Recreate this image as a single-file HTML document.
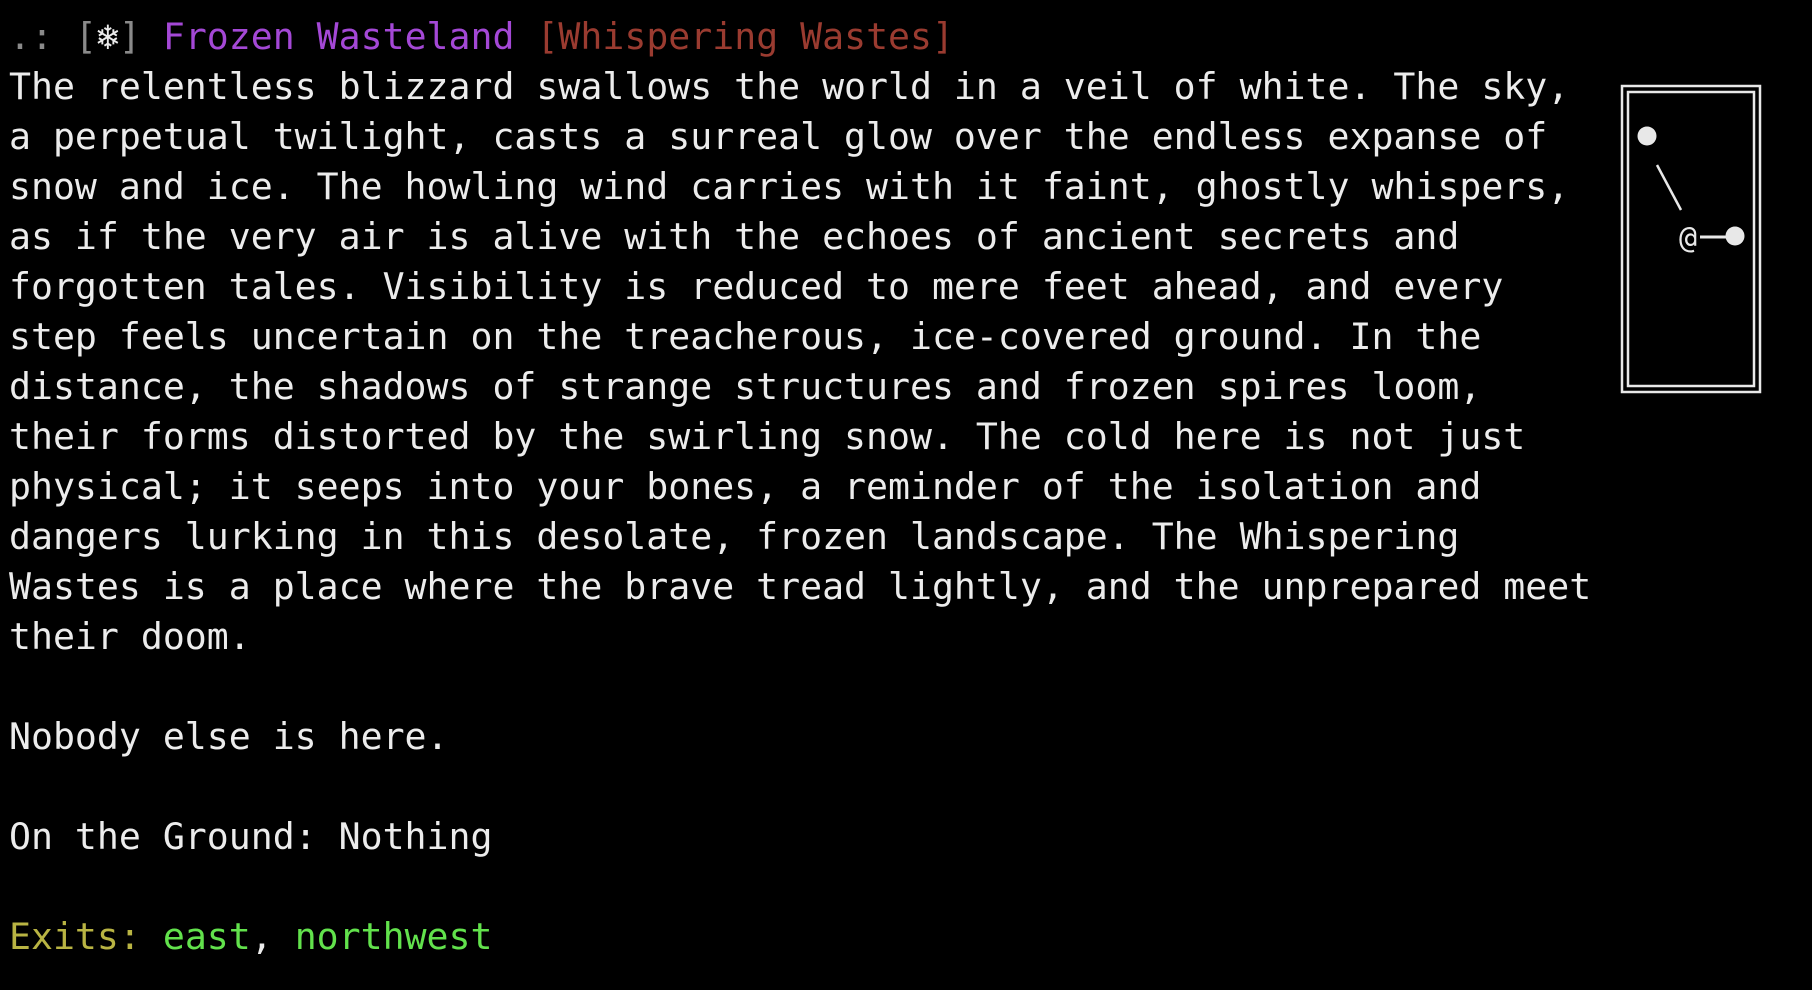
<!DOCTYPE html>
<html><head><meta charset="utf-8"><style>
html,body{margin:0;padding:0;background:#000;width:1812px;height:990px;overflow:hidden}
pre{margin:0;position:absolute;left:9px;top:12px;font-family:"DejaVu Sans Mono","Liberation Mono",monospace;font-size:36.5px;line-height:50px;color:#ececec;white-space:pre}
.g{color:#8a8a8a}.p{color:#a448d6}.r{color:#9a3b30}.y{color:#b9b443}.gr{color:#62e24c}
svg{position:absolute;left:0;top:0}
</style></head><body>
<pre><span class="g">.: [</span>❄<span class="g">]</span> <span class="p">Frozen Wasteland</span> <span class="r">[Whispering Wastes]</span>
The relentless blizzard swallows the world in a veil of white. The sky,
a perpetual twilight, casts a surreal glow over the endless expanse of
snow and ice. The howling wind carries with it faint, ghostly whispers,
as if the very air is alive with the echoes of ancient secrets and
forgotten tales. Visibility is reduced to mere feet ahead, and every
step feels uncertain on the treacherous, ice-covered ground. In the
distance, the shadows of strange structures and frozen spires loom,
their forms distorted by the swirling snow. The cold here is not just
physical; it seeps into your bones, a reminder of the isolation and
dangers lurking in this desolate, frozen landscape. The Whispering
Wastes is a place where the brave tread lightly, and the unprepared meet
their doom.

Nobody else is here.

On the Ground: Nothing

<span class="y">Exits:</span> <span class="gr">east</span>, <span class="gr">northwest</span></pre>
<svg width="1812" height="990">
<g fill="none" stroke="#e8e8e8" stroke-width="2.5">
<rect x="1622" y="86" width="138" height="306"/>
<rect x="1628" y="92" width="126" height="294"/>
<line x1="1657" y1="165" x2="1681" y2="210"/>
<line x1="1700" y1="237" x2="1727" y2="237" stroke-width="3"/>
</g>
<circle cx="1647" cy="136" r="9.5" fill="#e8e8e8"/>
<circle cx="1735" cy="236" r="9.5" fill="#e8e8e8"/>
<text x="1679" y="248" fill="#e8e8e8" font-family="DejaVu Sans Mono,monospace" font-size="30">@</text>
</svg>
</body></html>
